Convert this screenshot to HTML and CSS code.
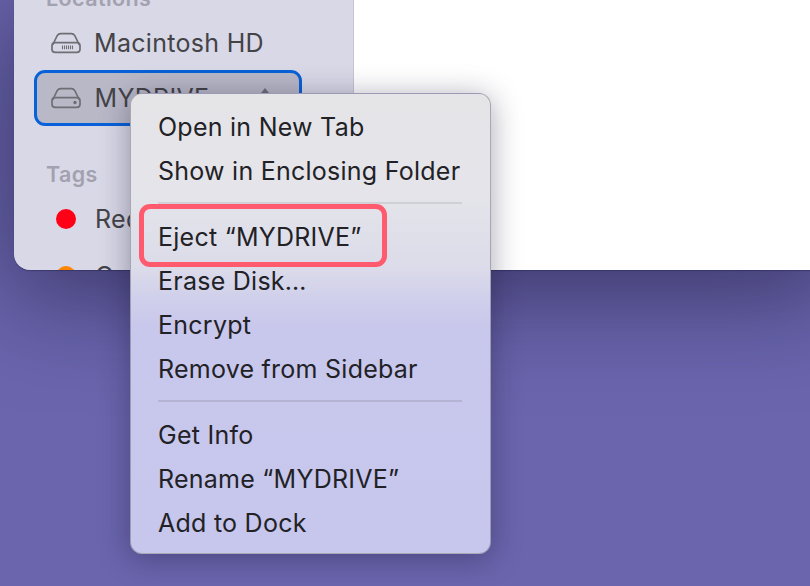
FILE: index.html
```html
<!DOCTYPE html>
<html lang="en">
<head>
<meta charset="utf-8">
<title>Eject MYDRIVE</title>
<link rel="stylesheet" href="styles.css">
</head>
<body>
<div class="desktop">
  <section class="window">
    <aside class="sidebar">
      <h2 class="heading heading-first">Locations</h2>
      <div class="row">
        <svg class="icon" viewBox="0 0 30 22" aria-hidden="true">
          <path class="line" d="M1.6 13 6.2 3.6C7 2.2 8.2 1.6 9.8 1.6H20.2C21.8 1.6 23 2.2 23.8 3.6L28.4 13"/>
          <rect class="line" x="1" y="10.6" width="28" height="9.8" rx="3.2"/>
          <path class="vent" d="M11.5 13.6v3.6M13.5 13.6v3.6M15.5 13.6v3.6M17.5 13.6v3.6M19.5 13.6v3.6M21.5 13.6v3.6"/>
        </svg>
        <span>Macintosh HD</span>
      </div>
      <div class="row row-selected">
        <svg class="icon" viewBox="0 0 30 22" aria-hidden="true">
          <path class="line" d="M1.6 13 6.2 3.6C7 2.2 8.2 1.6 9.8 1.6H20.2C21.8 1.6 23 2.2 23.8 3.6L28.4 13"/>
          <rect class="line" x="1" y="10.6" width="28" height="9.8" rx="3.2"/>
          <circle class="dot-fill" cx="24" cy="15.5" r="1.7"/>
        </svg>
        <span>MYDRIVE</span>
        <svg class="eject" viewBox="0 0 16 22" aria-hidden="true">
          <path class="eject-shape" d="M8 1 15 10H1ZM1 13H15V16H1Z"/>
        </svg>
      </div>
      <h2 class="heading heading-tags">Tags</h2>
      <div class="row row-tag"><span class="tag-slot"><i class="tag tag-red"></i></span><span>Red</span></div>
      <div class="row row-tag row-tag-next"><span class="tag-slot"><i class="tag tag-orange"></i></span><span>Orange</span></div>
    </aside>
    <div class="content"></div>
  </section>

  <nav class="menu">
    <div class="item">Open in New Tab</div>
    <div class="item">Show in Enclosing Folder</div>
    <div class="sep"></div>
    <div class="item">Eject “MYDRIVE”</div>
    <div class="item">Erase Disk…</div>
    <div class="item">Encrypt</div>
    <div class="item">Remove from Sidebar</div>
    <div class="sep sep-low"></div>
    <div class="item">Get Info</div>
    <div class="item">Rename “MYDRIVE”</div>
    <div class="item">Add to Dock</div>
    <div class="callout"></div>
  </nav>
</div>
</body>
</html>
```
FILE: styles.css
```css
* { box-sizing: border-box; }
html, body { margin: 0; height: 100%; }
body { font-family: Inter, "Liberation Sans", sans-serif; overflow: hidden; }

.desktop {
  position: relative;
  width: 810px;
  height: 586px;
  overflow: hidden;
  background: #6a65ad;
}

.window {
  position: absolute;
  left: 14px;
  top: 0;
  width: 820px;
  height: 270px;
  display: flex;
  overflow: hidden;
  border-radius: 0 0 16px 16px;
  box-shadow: 0 1px 1px rgba(30, 28, 70, .4), 0 20px 100px 5px rgba(20, 18, 50, .55);
}

.sidebar {
  width: 340px;
  flex: none;
  padding: 0 20px;
  background: #d9d8e6;
  border-right: 1px solid #c6c5d1;
  color: #434348;
  font-size: 25px;
  letter-spacing: .3px;
}

.content { flex: 1; background: #fff; }

.heading {
  margin: 0;
  height: 30px;
  line-height: 30px;
  padding-left: 12px;
  font-size: 21.5px;
  font-weight: 600;
  letter-spacing: .4px;
  color: #a2a1af;
}
.heading-first { margin-top: -17px; margin-bottom: 8px; }
.heading-tags { margin-top: 33px; margin-bottom: 8px; }

.row {
  display: flex;
  align-items: center;
  gap: 13px;
  height: 44px;
  padding-left: 17px;
}

.row-selected {
  width: 268px;
  height: 56px;
  margin-top: 5px;
  padding: 0 14px 0 13.5px;
  border: 3.5px solid #0861d8;
  border-radius: 11px;
  background: #b9b8c7;
  gap: 14px;
}

.row-tag { gap: 14px; }
.row-tag-next { margin-top: 13px; }

.icon { width: 30px; height: 22px; flex: none; }
.line { fill: none; stroke: #6e6e75; stroke-width: 1.7; }
.vent { fill: none; stroke: #6e6e75; stroke-width: 1.1; }
.dot-fill { fill: #6e6e75; }

.eject { width: 16px; height: 22px; margin-left: auto; margin-right: 12px; flex: none; }
.eject-shape { fill: #6f6f78; }

.tag-slot { width: 30px; display: flex; justify-content: center; flex: none; }
.tag { width: 20px; height: 20px; border-radius: 50%; display: block; }
.tag-red { background: #ff0017; }
.tag-orange { background: #ff8500; }

.menu {
  position: absolute;
  left: 130px;
  top: 93px;
  width: 361px;
  height: 461px;
  padding: 11px 0 9px;
  border-radius: 12px;
  border: 1px solid rgba(120, 118, 135, .55);
  background: linear-gradient(180deg, #e5e5e8 0, #e4e4ea 100px, #dcdcea 172px, #d0cfeb 205px, #c8c7ec 235px, #c7c6ec 100%);
  box-shadow: 0 4px 30px rgba(20, 18, 50, .38);
  color: #222226;
  font-size: 25px;
  letter-spacing: .25px;
}

.item {
  height: 44px;
  line-height: 44px;
  padding-left: 27px;
  white-space: nowrap;
}

.sep { height: 22px; margin: 0 28px 0 27px; position: relative; }
.sep::after {
  content: "";
  position: absolute;
  left: 0;
  right: 0;
  top: 9px;
  height: 2px;
  background: #d0d0d6;
}
.sep-low::after { background: #b4b3d4; }

.callout {
  position: absolute;
  left: 8px;
  top: 110px;
  width: 248px;
  height: 63px;
  border: 5px solid #ff5a6e;
  border-radius: 11px;
}
```
